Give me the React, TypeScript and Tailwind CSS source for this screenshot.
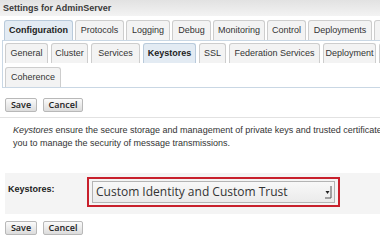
const topTabs: [string, number, boolean?][] = [
  ['Configuration', 69, true],
  ['Protocols', 49],
  ['Logging', 44],
  ['Debug', 39],
  ['Monitoring', 52],
  ['Control', 39],
  ['Deployments', 64],
  ['', 60],
];

const subTabs: [string, number, boolean?][] = [
  ['General', 43],
  ['Cluster', 37],
  ['Services', 49],
  ['Keystores', 53, true],
  ['SSL', 27],
  ['Federation Services', 91],
  ['Deployment', 53],
  ['', 50],
];

function Tab({ label, width, active }: { label: string; width: number; active?: boolean }) {
  return (
    <div
      style={{ width }}
      className={
        'h-[20px] shrink-0 rounded-t-[3px] border border-b-0 text-center leading-[19px] whitespace-nowrap ' +
        (active
          ? 'border-[#b9cadb] bg-[#e3ebf3] font-bold text-[#222]'
          : 'border-[#cdcdcd] bg-[#f3f3f3] text-[#333]')
      }
    >
      {label}
    </div>
  );
}

function Buttons() {
  return (
    <div className="flex gap-[6px] pl-[5px] font-['Open_Sans',sans-serif] text-[9px] font-semibold text-[#222]">
      <button className="h-[14px] w-[32px] rounded-[2px] border border-[#b8b8b8] bg-gradient-to-b from-[#fbfbfb] to-[#dcdcdc] leading-[12px]">
        Save
      </button>
      <button className="h-[14px] w-[40px] rounded-[2px] border border-[#b8b8b8] bg-gradient-to-b from-[#fbfbfb] to-[#dcdcdc] leading-[12px]">
        Cancel
      </button>
    </div>
  );
}

export default function App() {
  return (
    <div className="h-[250px] w-[380px] overflow-hidden bg-white font-['Liberation_Sans',Arial,sans-serif] text-[9px] text-[#333]">
      <div className="h-[16px] bg-gradient-to-b from-[#e2e2e2] to-[#f3f3f3] pl-[3px] pt-[2px] font-bold leading-[12px] text-[#3a3a3a]">
        Settings for AdminServer
      </div>

      <div className="flex w-[440px] gap-[2px] pl-[4px] pt-[4px]">
        {topTabs.map(([label, w, active], i) => (
          <Tab key={i} label={label} width={w} active={active} />
        ))}
      </div>

      <div className="ml-[2px] flex w-[440px] flex-col gap-[4px] border-b border-l border-t border-[#c9d7e4] pl-[2px] pt-[2px]">
        <div className="flex gap-[3px]">
          {subTabs.map(([label, w, active], i) => (
            <Tab key={i} label={label} width={w} active={active} />
          ))}
        </div>
        <div className="flex">
          <Tab label="Coherence" width={56} />
        </div>
      </div>

      <div className="mt-[10px]">
        <Buttons />
      </div>

      <div className="mt-[5px] h-px bg-[#e2e2e2]" />

      <div className="mt-[6px] w-[460px] pl-[13px] leading-[12.5px] text-[#333]">
        <div className="whitespace-nowrap">
          <i>Keystores</i> ensure the secure storage and management of private keys and trusted certificate authorities (CAs).
        </div>
        <div className="whitespace-nowrap">you to manage the security of message transmissions.</div>
      </div>

      <div className="ml-[5px] mt-[24px] flex h-[41px] items-start bg-[#f4f4f4] pl-[3px] pt-[4px]">
        <div className="mt-[6px] w-[79px] font-bold leading-[12px] text-[#222]">Keystores:</div>
        <div className="h-[30px] w-[253px] border-2 border-[#c8202c] px-[3px] py-[2px]">
          <div className="flex h-[22px] items-center justify-between border border-[#b4b4b4] bg-gradient-to-b from-[#f8f8f8] to-[#ebebeb] pl-[3px] pr-[2px] font-['Open_Sans',sans-serif] text-[12px] text-[#333]">
            <span>Custom Identity and Custom Trust</span>
            <svg width="8" height="14" viewBox="0 0 8 14">
              <path d="M1.5 6h4l-2 3z" fill="#222" />
              <path d="M7 1v12H1" stroke="#555" strokeWidth="1" fill="none" />
            </svg>
          </div>
        </div>
      </div>

      <div className="mt-[7px]">
        <Buttons />
      </div>
    </div>
  );
}
